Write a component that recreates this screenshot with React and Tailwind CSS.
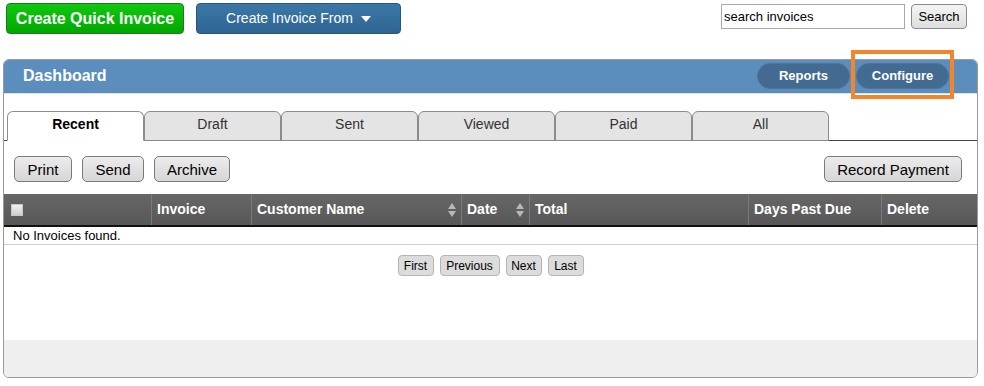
const tabs = ["Recent", "Draft", "Sent", "Viewed", "Paid", "All"];

function SortArrows() {
  return (
    <svg width="8" height="16" viewBox="0 0 8 16" className="shrink-0">
      <path d="M4 1 L8 7 L0 7 Z" fill="#b8b8b8" />
      <path d="M0 9 L8 9 L4 15 Z" fill="#b8b8b8" />
    </svg>
  );
}

function GrayButton({ children, className = "" }) {
  return (
    <button
      type="button"
      className={`h-[26px] rounded-[5px] border border-[#7a7a7a] bg-gradient-to-b from-[#ececec] to-[#d6d6d6] text-[15px] leading-none text-black ${className}`}
    >
      {children}
    </button>
  );
}

function PageButton({ children, className = "" }) {
  return (
    <button
      type="button"
      className={`h-[21px] rounded-[4px] border border-[#b5b5b5] bg-[#dcdcdc] text-[12px] leading-none text-black ${className}`}
    >
      {children}
    </button>
  );
}

export default function App() {
  return (
    <div className="relative h-[386px] w-[984px] overflow-hidden bg-white font-['Liberation_Sans',Arial,sans-serif]">
      {/* top actions */}
      <div className="flex items-start pl-[6px] pt-[3px]">
        <button
          type="button"
          className="h-[31px] w-[178px] rounded-[4px] border border-[#1f7a1f] bg-gradient-to-b from-[#10c810] to-[#00a800] text-[16px] font-bold text-white"
        >
          Create Quick Invoice
        </button>
        <button
          type="button"
          className="ml-[12px] flex h-[31px] w-[205px] items-center justify-center gap-[8px] rounded-[4px] border border-[#2a5478] bg-gradient-to-b from-[#3b78a8] to-[#2e6593] text-[14px] text-white"
        >
          Create Invoice From
          <svg width="10" height="6" viewBox="0 0 10 6">
            <path d="M0 0 L10 0 L5 6 Z" fill="#ffffff" />
          </svg>
        </button>
        <div className="ml-auto mr-[17px] mt-[1px] flex items-start gap-[6px]">
          <input
            readOnly
            value="search invoices"
            className="h-[25px] w-[184px] border border-[#a9a9a9] px-[2px] text-[13px] text-black outline-none"
          />
          <button
            type="button"
            className="h-[25px] w-[56px] rounded-[4px] border border-[#8a8a8a] bg-gradient-to-b from-[#f4f4f4] to-[#dedede] text-[13px] text-black"
          >
            Search
          </button>
        </div>
      </div>

      {/* dashboard panel */}
      <div className="ml-[3px] mt-[25px] w-[975px] rounded-[6px] border border-[#9a9a9a]">
        <div className="flex h-[34px] items-center rounded-t-[5px] border-b border-[#d9e3ee] bg-[#5b8dbd] pb-[1px] pl-[19px] pr-[28px]">
          <span className="text-[16px] font-bold text-white">Dashboard</span>
          <div className="ml-auto flex gap-[6px]">
            <button
              type="button"
              className="h-[26px] w-[93px] rounded-full border border-[#4d7399] bg-[#436a90] text-[13px] font-bold text-white"
            >
              Reports
            </button>
            <button
              type="button"
              className="h-[26px] w-[93px] rounded-full border border-[#4d7399] bg-[#436a90] text-[13px] font-bold text-white"
            >
              Configure
            </button>
          </div>
        </div>

        {/* tabs */}
        <div className="mt-[17px] flex border-b border-[#444] pl-[3px]">
          {tabs.map((tab, index) => (
            <div
              key={tab}
              className={`-mb-px flex h-[30px] w-[137px] items-center justify-center rounded-t-[6px] border border-[#8c8c8c] pb-[3px] text-[14px] ${
                index === 0
                  ? "border-b-white bg-white font-bold text-black"
                  : "bg-[#e4e4e4] text-[#333]"
              }`}
            >
              {tab}
            </div>
          ))}
        </div>

        {/* toolbar */}
        <div className="flex px-[10px] pt-[15px]">
          <GrayButton className="w-[58px]">Print</GrayButton>
          <GrayButton className="ml-[10px] w-[62px]">Send</GrayButton>
          <GrayButton className="ml-[10px] w-[76px]">Archive</GrayButton>
          <GrayButton className="ml-auto mr-[5px] w-[138px]">Record Payment</GrayButton>
        </div>

        {/* table */}
        <div className="mt-[12px]">
          <div className="flex h-[33px] items-center border-b-2 border-[#111] bg-gradient-to-b from-[#676767] to-[#575757] text-[14px] font-bold text-white">
            <div className="flex h-full w-[148px] items-center border-r border-[#7a7a7a] pl-[7px]">
              <span className="h-[12px] w-[12px] border border-[#c8c8c8] bg-gradient-to-b from-[#f2f2f2] to-[#cfcfcf]" />
            </div>
            <div className="flex h-full w-[100px] items-center border-r border-[#7a7a7a] pl-[5px]">Invoice</div>
            <div className="flex h-full w-[210px] items-center justify-between border-r border-[#7a7a7a] pl-[5px] pr-[5px]">
              Customer Name
              <SortArrows />
            </div>
            <div className="flex h-full w-[68px] items-center justify-between border-r border-[#7a7a7a] pl-[5px] pr-[5px]">
              Date
              <SortArrows />
            </div>
            <div className="flex h-full w-[219px] items-center border-r border-[#7a7a7a] pl-[5px]">Total</div>
            <div className="flex h-full w-[133px] items-center border-r border-[#7a7a7a] pl-[5px]">Days Past Due</div>
            <div className="flex h-full flex-1 items-center pl-[5px]">Delete</div>
          </div>
          <div className="flex h-[18px] items-center border-b border-[#cfcfcf] pl-[9px] text-[13px] text-black">
            No Invoices found.
          </div>
        </div>

        {/* pagination */}
        <div className="mt-[10px] flex justify-center gap-[6px]">
          <PageButton className="w-[36px]">First</PageButton>
          <PageButton className="w-[60px]">Previous</PageButton>
          <PageButton className="w-[36px]">Next</PageButton>
          <PageButton className="w-[36px]">Last</PageButton>
        </div>

        <div className="mt-[64px] h-[37px] rounded-b-[5px] bg-[#efefef]" />
      </div>

      {/* highlight box */}
      <div className="absolute left-[851px] top-[50px] h-[49px] w-[103px] border-4 border-[#f5852a]" />
    </div>
  );
}
